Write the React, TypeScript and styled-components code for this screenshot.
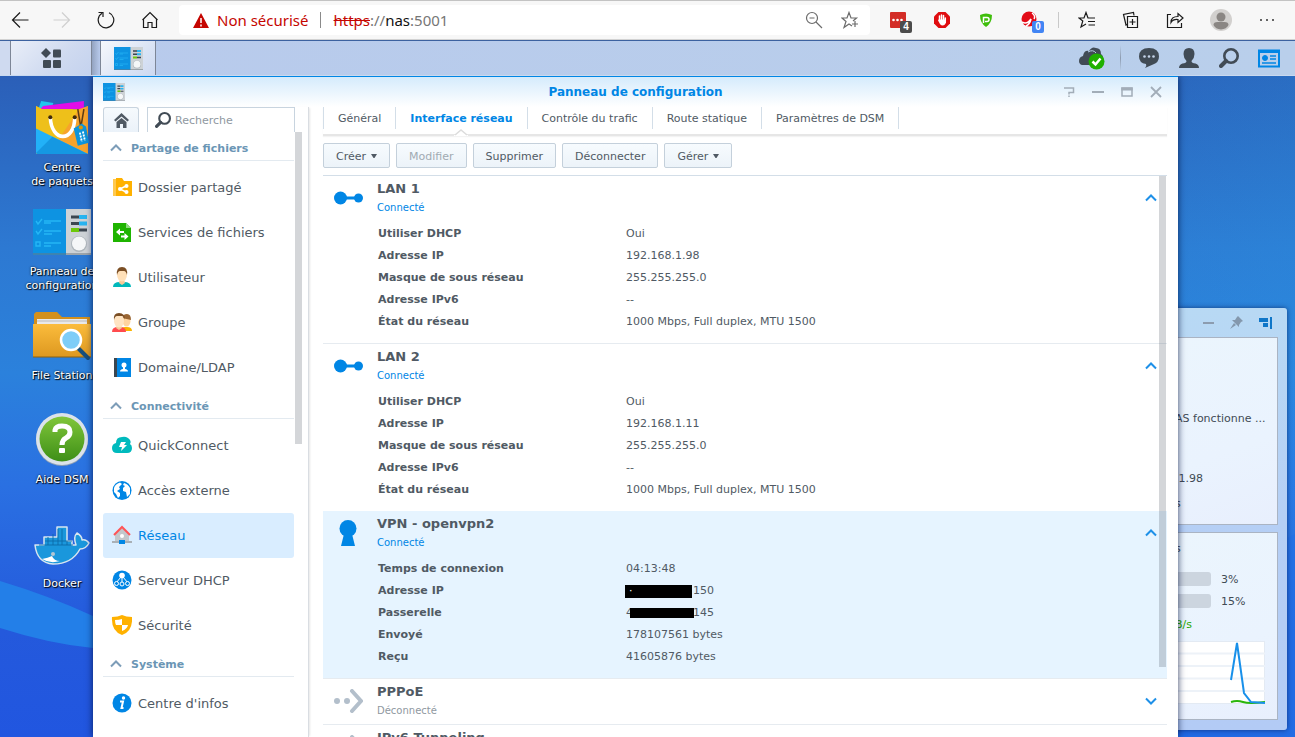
import React from 'react';
import styled, { createGlobalStyle, css } from 'styled-components';

const Global = createGlobalStyle`
  * { box-sizing: border-box; }
  html, body, #root { height: 100%; }
  body {
    margin: 0;
    overflow: hidden;
    font-family: Verdana, "DejaVu Sans", sans-serif;
    font-size: 11px;
    color: #505a64;
  }
  button, input { font-family: inherit; font-size: inherit; color: inherit; }
  button { border: 0; padding: 0; background: none; }
  h1, h2, h3, ul, dl, dd, dt, p { margin: 0; padding: 0; font-size: inherit; font-weight: inherit; }
  ul { list-style: none; }
  a { color: inherit; text-decoration: none; }
  svg { display: block; flex: none; }
`;

const Screen = styled.div`
  display: flex;
  flex-direction: column;
  height: 100vh;
  overflow: hidden;
`;

/* ---------- browser ---------- */

const BrowserBar = styled.header`
  display: flex;
  align-items: center;
  flex: none;
  height: 40px;
  padding-right: 6px;
  background: #f7f7f7;
  border-top: 1px solid #c3c3c3;
  border-bottom: 1px solid #d2d2d2;
  font-family: "Segoe UI", "Noto Sans", sans-serif;
  font-size: 15px;
`;

const BarButton = styled.button<{ $w?: number }>`
  display: flex;
  align-items: center;
  justify-content: center;
  position: relative;
  flex: none;
  width: ${p => p.$w ?? 44}px;
  height: 32px;
  color: #1b1b1b;
`;

const AddressBar = styled.div`
  display: flex;
  align-items: center;
  flex: 1;
  min-width: 0;
  height: 30px;
  margin: 0 6px 0 7px;
  padding: 0 2px 0 14px;
  background: #fff;
  border-radius: 4px;
  white-space: nowrap;
`;

const Warning = styled.span`
  margin-left: 8px;
  color: #c50500;
`;

const Bar = styled.span<{ $m: number; $c: string }>`
  flex: none;
  width: 1px;
  height: 16px;
  margin: 0 ${p => p.$m}px;
  background: ${p => p.$c};
`;

const Url = styled.span`
  flex: 1;
  color: #767676;
  s { color: #c50500; }
  b { color: #111; font-weight: 400; }
`;

const Badge = styled.span<{ $c: string }>`
  position: absolute;
  left: 24px;
  top: 17px;
  width: 12px;
  height: 12px;
  border-radius: 2px;
  background: ${p => p.$c};
  color: #fff;
  font: bold 10px/12px "Liberation Sans", sans-serif;
  text-align: center;
`;

/* ---------- taskbar ---------- */

const Taskbar = styled.nav`
  display: flex;
  align-items: stretch;
  flex: none;
  height: 36px;
  border-top: 1px solid #3c62a0;
  border-bottom: 1px solid #c9d9ef;
  padding-right: 6px;
  background: linear-gradient(90deg, #b8caec, #b9cfeb);
`;

const TaskEdge = styled.span`
  width: 10px;
  background: #cfdaf0;
`;

const MenuButton = styled.button`
  display: flex;
  align-items: center;
  justify-content: center;
  width: 82px;
  border: 1px solid #7d8697;
  border-width: 0 1px;
  background: linear-gradient(135deg, #e9eef8, #cfdaf0 60%, #c4d2ee);
`;

const TaskGap = styled.span`
  width: 8px;
  background: linear-gradient(90deg, #93a3c0, #b8caec);
`;

const TaskTab = styled.button`
  display: flex;
  align-items: center;
  justify-content: center;
  width: 56px;
  border: 1px solid #7d8697;
  border-width: 0 1px;
  background: linear-gradient(135deg, #f6f8fc, #dbe4f5 60%, #cdd9f1);
`;

const Spacer = styled.span`
  flex: 1;
`;

const TrayButton = styled.button`
  display: flex;
  align-items: center;
  justify-content: center;
  width: 40px;
  color: #414b55;
`;

const TrayRule = styled.span`
  width: 1px;
  margin: 4px 8px;
  background: linear-gradient(#b9cfeb, #8d9bb0, #b9cfeb);
`;

/* ---------- desktop ---------- */

const Desktop = styled.main`
  position: relative;
  flex: 1;
  min-height: 0;
  overflow: hidden;
  background:
    linear-gradient(90deg, transparent 75%, rgba(40, 165, 235, .2)),
    linear-gradient(#2b5fb8 0, #2d79d2 26%, #2b81dc 45%, #2a70e2 62%, #2459dc 84%, #2156e0);
`;

const Wallpaper = styled.svg`
  position: absolute;
  inset: 0;
  width: 100%;
  height: 100%;
`;

const Shortcuts = styled.ul`
  position: relative;
  width: 124px;
  padding-top: 24px;
`;

const Shortcut = styled.li`
  height: 104px;
  a {
    display: flex;
    flex-direction: column;
    align-items: center;
    gap: 5px;
    color: #fff;
    line-height: 14px;
    text-align: center;
    text-shadow: 1px 1px 1px #000, 0 0 2px rgba(0, 0, 0, .8);
    white-space: pre-line;
  }
`;

const IconBox = styled.span`
  display: flex;
  align-items: center;
  justify-content: center;
  height: 56px;
`;

/* ---------- widget panel ---------- */

const Widgets = styled.aside`
  position: absolute;
  top: 232px;
  right: 8px;
  width: 121px;
  padding: 0 9px 10px 0;
  border-radius: 3px;
  background: linear-gradient(#b8d9f4, #b5cff5 50%, #b3cbf5);
  box-shadow: 0 0 5px rgba(10, 30, 90, .7);
`;

const WidgetHead = styled.div`
  display: flex;
  align-items: center;
  justify-content: flex-end;
  gap: 16px;
  height: 29px;
  padding-right: 6px;
`;

const Card = styled.section<{ $gap?: boolean }>`
  display: flex;
  flex-direction: column;
  height: 188px;
  margin-top: ${p => (p.$gap ? 7 : 0)}px;
  padding: 0 11px 13px 8px;
  border: 1px solid #aab4c3;
  background: linear-gradient(160deg, #ebf5fd, #eaf3fe 60%, #e8effd);
  color: #414b55;
  white-space: nowrap;
`;

const CardLine = styled.p<{ $top: number; $green?: boolean }>`
  margin-top: ${p => p.$top}px;
  line-height: 16px;
  color: ${p => (p.$green ? '#1fa800' : 'inherit')};
`;

const Meters = styled.div`
  margin-top: 11px;
`;

const Meter = styled.div`
  display: flex;
  align-items: center;
  gap: 10px;
  height: 22px;
  &::before {
    content: "";
    width: 36px;
    height: 14px;
    border-radius: 0 3px 3px 0;
    background: #ccd5df;
  }
`;

const Chart = styled.svg`
  margin-top: 8px;
`;

/* ---------- control panel window ---------- */

const Window = styled.section`
  display: flex;
  flex-direction: column;
  position: absolute;
  top: 0;
  bottom: 0;
  left: 93px;
  right: 117px;
  padding: 0 11px 0 10px;
  border-top: 1px solid #0086e5;
  background: linear-gradient(#d5ebfc, #fff 30px);
  box-shadow: 0 -1px 0 #0086e5, 0 0 7px rgba(0, 15, 60, .8);
`;

const TitleBar = styled.header`
  display: flex;
  align-items: center;
  flex: none;
  height: 30px;
`;

const Title = styled.h1`
  flex: 1;
  padding-left: 84px;
  color: #0086e5;
  font-size: 12px;
  font-weight: 700;
  text-align: center;
`;

const WinButtons = styled.div`
  display: flex;
  gap: 15px;
  padding-right: 4px;
  button { width: 14px; height: 14px; color: #a2adb8; }
`;

const Columns = styled.div`
  display: flex;
  flex: 1;
  min-height: 0;
`;

const Sidebar = styled.aside`
  display: flex;
  flex-direction: column;
  position: relative;
  flex: none;
  width: 206px;
  padding-right: 14px;
  border-right: 1px solid #d9dde2;
  box-shadow: 2px 0 2px -1px rgba(0, 0, 0, .1);
`;

const SearchRow = styled.div`
  display: flex;
  flex: none;
  gap: 8px;
  height: 25px;
`;

const HomeButton = styled.button`
  display: flex;
  align-items: center;
  justify-content: center;
  width: 36px;
  border: 1px solid #c8d4df;
  border-bottom: 0;
  border-radius: 3px 3px 0 0;
  background: linear-gradient(#f6fafd, #ebf2f9);
`;

const SearchField = styled.label`
  display: flex;
  align-items: center;
  flex: 1;
  min-width: 0;
  gap: 4px;
  margin-right: -1px;
  padding-left: 7px;
  border: 1px solid #c8d4df;
  border-bottom: 0;
  input {
    flex: 1;
    min-width: 0;
    padding: 0;
    border: 0;
    outline: 0;
    background: none;
  }
  input::placeholder { color: #8f989f; opacity: 1; }
`;

const Group = styled.h2`
  display: flex;
  align-items: center;
  gap: 9px;
  height: 29px;
  margin-bottom: 4px;
  padding: 4px 0 0 7px;
  border-bottom: 1px solid #e3eaf0;
  color: #6b96b5;
  font-size: 11px;
  font-weight: 700;
`;

const NavItem = styled.a<{ $on?: boolean }>`
  display: flex;
  align-items: center;
  gap: 6px;
  height: 45px;
  padding-left: 8px;
  border-radius: 3px;
  font-size: 13px;
  ${p => p.$on && css`background: #d9edff; color: #0086e5;`}
`;

const ScrollThumb = styled.span<{ $right: number; $top: number; $h: string }>`
  position: absolute;
  top: ${p => p.$top}px;
  right: ${p => p.$right}px;
  width: 7px;
  height: ${p => p.$h};
  background: rgba(60, 70, 80, .22);
`;

const Content = styled.div`
  display: flex;
  flex-direction: column;
  flex: 1;
  min-width: 0;
  padding-left: 14px;
`;

const Tabs = styled.div`
  display: flex;
  flex: none;
  height: 29px;
  border-bottom: 2px solid #e6e6e6;
  box-shadow: 0 1px 1px #f3f3f3;
`;

const Tab = styled.button<{ $on?: boolean }>`
  position: relative;
  height: 22px;
  padding: 0 14px;
  border-right: 1px solid #d3dee8;
  white-space: nowrap;
  &:first-child { border-left: 1px solid #d3dee8; }
  ${p => p.$on && css`
    color: #0086e5;
    font-weight: 700;
    svg { position: absolute; left: calc(50% - 7px); top: 22px; }
  `}
`;

const Toolbar = styled.div`
  display: flex;
  flex: none;
  gap: 6px;
  padding: 7px 0;
`;

const ToolButton = styled.button`
  display: flex;
  align-items: center;
  gap: 5px;
  height: 25px;
  padding: 1px 12px 0;
  border: 1px solid #c4d0db;
  border-radius: 2px;
  background: linear-gradient(#f7fbfe, #ecf3f9);
  white-space: nowrap;
  &:disabled { color: #a1aab2; }
`;

const List = styled.div`
  position: relative;
  flex: 1;
  min-height: 0;
  overflow: hidden;
  border-top: 1px solid #d3dee8;
`;

const Interface = styled.article<{ $on?: boolean }>`
  border-bottom: 1px solid #e6ebf0;
  ${p => p.$on && css`margin-top: -1px; background: #e6f4ff;`}
`;

const IfaceHead = styled.header`
  display: flex;
  align-items: center;
  height: 45px;
  padding: 0 10px 1px 0;
`;

const IfaceIcon = styled.span`
  display: flex;
  justify-content: center;
  width: 50px;
  margin-right: 4px;
`;

const IfaceName = styled.div<{ $off?: boolean }>`
  flex: 1;
  h3 { font-size: 13px; font-weight: 700; line-height: 20px; }
  p { font-size: 10px; line-height: 18px; color: ${p => (p.$off ? '#8f989f' : '#0086e5')}; }
`;

const Details = styled.dl`
  display: grid;
  grid-template-columns: 248px 1fr;
  padding: 2px 0 10px 55px;
  line-height: 22px;
  dt { font-weight: 700; }
`;

const Redacted = styled.dd<{ $cut?: boolean }>`
  display: flex;
  align-items: center;
  i {
    width: ${p => (p.$cut ? 64 : 67)}px;
    height: ${p => (p.$cut ? 10 : 13)}px;
    margin-left: ${p => (p.$cut ? -3 : -1)}px;
    margin-right: ${p => (p.$cut ? -1 : 1)}px;
    padding-left: 4px;
    background: #000;
    color: #fff;
    font-style: normal;
    line-height: 11px;
    z-index: 1;
  }
`;

/* ---------- drawings ---------- */

const PanelIcon = ({ w, h }: { w: number; h: number }) => (
  <svg width={w} height={h} viewBox="0 0 58 46" preserveAspectRatio="none">
    <rect width="58" height="46" fill="#cdd2d6" />
    <rect width="33" height="46" fill="#0d93e2" />
    <path d="M0 45h58" stroke="#6d7780" strokeWidth="2" opacity=".5" />
    <g stroke="#25b6f5" strokeWidth="1.400" fill="none">
      <path d="M3 12l2 3 4-5M11 12h17M11 14h7M3 22l2 3 4-5M11 22h17M11 25h8M3 33h4v4H3zM11 34h17M11 37h7" />
    </g>
    <path d="M38 8h8M38 14.500h8M46 21h8" stroke="#3c4650" strokeWidth="3" />
    <path d="M46 8h8M46 14.500h8" stroke="#28b4f0" strokeWidth="4" />
    <path d="M38 21h8" stroke="#6cc80a" strokeWidth="4" />
    <circle cx="46" cy="35" r="8" fill="#aeb6bc" />
    <circle cx="46" cy="34.500" r="7" fill="#f5f7f8" />
  </svg>
);

const BagIcon = () => (
  <svg width="54" height="54" viewBox="0 0 53 53">
    <path d="M6 0l12 2-2 7H3z" fill="#22c5ee" /><path d="M8 5l40-5v8H5z" fill="#e20de8" />
    <path d="M1 5l6 3h39l6-3v46a1 1 0 0 1-1 1H2a1 1 0 0 1-1-1z" fill="#f5c417" />
    <path d="M1 5l6 3h30L29 52H2L1 51z" fill="#eec01a" />
    <path d="M43 8l9-3v47H36l-13-14z" fill="#f7a32c" />
    <path d="M1 27l51 25H2L1 51z" fill="#22b1f8" /><path d="M1 51l16-16 35 17H2z" fill="#1598e2" />
    <path d="M15 16C16 41 39 41 39 16" fill="none" stroke="#fff" strokeWidth="3.500" />
    <circle cx="15" cy="16" r="2" fill="#412a0a" /><circle cx="39" cy="16" r="2" fill="#412a0a" />
    <path d="M42 8l3 18M48 8l-3 18" stroke="#5d3d16" strokeWidth="1.500" fill="none" />
    <path d="M38 27l8-5 4 3 3 16-11 3z" fill="#0d94db" /><circle cx="45" cy="26" r="2" fill="#d9980a" />
    <path d="M44 31l2 9M47 30l2 9" stroke="#fff" strokeWidth="1.800" strokeDasharray="2 1" />
  </svg>
);

const FolderIcon = () => (
  <svg width="58" height="50" viewBox="0 0 58 50">
    <defs><linearGradient id="fold" x2="0" y2="1"><stop stopColor="#fbbc3c" /><stop offset="1" stopColor="#dd9820" /></linearGradient></defs>
    <path d="M1 3l2-2h21l5 5h28v10H1z" fill="#d3901c" /><path d="M4 8h50v7H4z" fill="#e9e9e9" /><path d="M4 10h50" stroke="#bbb" />
    <path d="M0 13h58v33H0z" fill="url(#fold)" /><path d="M0 46h58" stroke="#8d610f" />
    <path d="M46 38l9 9" stroke="#174f7c" strokeWidth="4" strokeLinecap="round" />
    <circle cx="38" cy="29" r="10" fill="#7ecdf8" stroke="#fff" strokeWidth="2.500" />
  </svg>
);

const HelpIcon = () => (
  <svg width="54" height="56" viewBox="0 0 54 56">
    <defs><linearGradient id="help" x2="0" y2="1"><stop stopColor="#80c63a" /><stop offset="1" stopColor="#3e8f17" /></linearGradient></defs>
    <circle cx="27" cy="28" r="26" fill="#8f9fb4" /><circle cx="27" cy="27" r="26" fill="#dbe2ea" />
    <circle cx="27" cy="27" r="22.500" fill="url(#help)" />
    <path d="M20 20v-2q1-4 7-4 8 0 8 6 0 4-4 6-4 2-4 7" fill="none" stroke="#fff" strokeWidth="5" />
    <rect x="24" y="36" width="6" height="5" rx="1" fill="#fff" />
  </svg>
);

const DockerIcon = () => (
  <svg width="56" height="48" viewBox="0 -6 56 48">
    <path d="M1 19h9v-8h13V1h10v14h5v4h4q-3-8 1-12 5 3 5 7 4-1 7 3-3 6-9 6-8 15-27 15Q3 37 1 19z" fill="#1a97dc" stroke="#d7e5ef" strokeWidth="1.500" strokeLinejoin="round" />
    <path d="M5 19h34M11 15h27M14 11v8M19 8v11M24 3v16M28 3v16M33 15v4" stroke="#0b6ca8" strokeWidth=".9" />
    <circle cx="19" cy="28" r="2" fill="#b3c6d2" /><path d="M8 33q6-1 10-3 2 5 8 5-10 3-18-2z" fill="#fff" />
  </svg>
);

const navIcons: Record<string, React.ReactNode> = {
  share: <><path d="M1 2h7l2 2v15H1z" fill="#ffc94f" /><path d="M4 1h6l2 3h8v15H4z" fill="#ffb100" /><path d="M8 12l6-3M8 12l6 3" stroke="#fff" strokeWidth="1.500" /><g fill="#fff"><circle cx="8" cy="12" r="2" /><circle cx="14.500" cy="9" r="2" /><circle cx="14.500" cy="15" r="2" /></g></>,
  files: <><path d="M1 1h13l5 5v14H1z" fill="#1fb400" /><path d="M14 1l5 5h-5z" fill="#8edb7e" /><path d="M6 10h6M9 14.500h6" stroke="#fff" strokeWidth="2" /><path d="M8 6.500v7L4 10zM12.500 11v7l4-3.500z" fill="#fff" /></>,
  user: <><path d="M1 20q0-5 7-5h4q7 0 7 5z" fill="#00b8bb" /><path d="M8 12h4l1 4-3 2-3-2z" fill="#f6c997" /><ellipse cx="10" cy="8" rx="5" ry="6.500" fill="#ffe0b8" /><path d="M5 8Q4 0 10 0t5 8q-1-4-3-4H8Q6 4 5 8z" fill="#7b4e24" /></>,
  group: <><path d="M9 19q0-4 4-4h2q5 0 5 4z" fill="#fbb400" /><ellipse cx="14.500" cy="9" rx="4" ry="5.500" fill="#ffd49f" /><path d="M10 6q1-4 5-4t4 6z" fill="#9a6633" /><path d="M0 20q0-5 6-5h2q6 0 6 5z" fill="#ff4b4e" /><path d="M5 13h4l1 3-3 2-3-2z" fill="#f6c997" /><ellipse cx="7" cy="9" rx="5" ry="6.500" fill="#ffe4c2" /><path d="M2 8Q1 1 7 1t6 7q-1-4-3-4H5Q3 4 2 8z" fill="#7b4e24" /></>,
  book: <><rect x="2" y="1" width="3" height="19" fill="#3a4650" /><rect x="5" y="1" width="14" height="19" fill="#0086e5" /><circle cx="12" cy="8" r="2.500" fill="#fff" /><path d="M8 14.500q0-2 3-2.500v-2h2v2q3 .5 3 2.500z" fill="#fff" /></>,
  quick: <><path d="M5 18q-5 0-5-5 0-4 4-5 0-6 6-6 3-1 6 1 4 3 2 6 2 1 2 4 0 5-5 5z" fill="#00babd" /><path d="M9 7h5l-2 3h3l-6 6 1-4H7z" fill="#fff" /></>,
  globe: <><circle cx="10" cy="10.500" r="9.500" fill="#0086e5" /><path d="M2 8q1-4 6-5.500l2 1.500-3 3 1 2-3 2 3 2v3l-2 2-2-4-2-2zM12 3q4 1 6 5v6l-3 3-1-5-3-1v-3l2-2-2-1z" fill="#fff" /></>,
  network: <><path d="M0 17h20" stroke="#a9b0b6" strokeWidth="2" /><path d="M3 9l7-6 7 6v7H3z" fill="#c3c7cb" /><path d="M2 10l8-8 8 8" fill="none" stroke="#ff5457" strokeWidth="2" /><circle cx="10" cy="11" r="2" fill="#fff" /><rect x="7" y="15" width="6" height="4" fill="#0086e5" /></>,
  dhcp: <><circle cx="10" cy="10" r="9.500" fill="#0086e5" /><circle cx="10" cy="5.500" r="2.800" fill="#fff" /><path d="M10 7v6M9 7l-5 6M11 7l5 6" stroke="#fff" /><g fill="#0086e5" stroke="#fff"><circle cx="4.500" cy="13.500" r="2" /><circle cx="10" cy="14" r="2" /><circle cx="15.500" cy="13.500" r="2" /></g></>,
  shield: <><path d="M0 2q6 0 10-2 4 2 10 2 1 14-10 18Q-1 16 0 2z" fill="#ffb100" /><path d="M10 4v6H4q-1-2-1-5 4 0 7-1zM10 10h6q-1 4-6 6z" fill="#fff" /></>,
  info: <><circle cx="10" cy="10" r="9.500" fill="#0086e5" /><circle cx="11.500" cy="5" r="1.700" fill="#fff" /><path d="M8 8.500h3l-1.500 6.500h2" fill="none" stroke="#fff" strokeWidth="2" /></>,
};

const NavIcon = ({ name }: { name: string }) => <svg width="21" height="21" viewBox="-1 0 21 21">{navIcons[name]}</svg>;

const Chevron = ({ c, down }: { c: string; down?: boolean }) => (
  <svg width="12" height="8" viewBox="0 0 12 8"><path d={down ? 'M1 1.500l5 5 5-5' : 'M1 6.500l5-5 5 5'} fill="none" stroke={c} strokeWidth="2" /></svg>
);

const ifaceIcons = {
  lan: <svg width="30" height="14" viewBox="-1 0 30 14"><path d="M6 7h18" stroke="#0086e5" strokeWidth="3" /><circle cx="6.500" cy="7" r="6.500" fill="#0086e5" /><circle cx="24.500" cy="7" r="4.500" fill="#0086e5" /></svg>,
  vpn: <svg width="18" height="26" viewBox="0 0 18 26"><circle cx="9" cy="8.500" r="8.500" fill="#0086e5" /><path d="M5 14h8l3 12H2z" fill="#0086e5" /></svg>,
  off: <svg width="30" height="24" viewBox="-1 0 30 24"><circle cx="3" cy="12" r="3" fill="#b3bfcb" /><circle cx="13" cy="12" r="3" fill="#b3bfcb" /><path d="M18 2l9 10-9 10" fill="none" stroke="#b3bfcb" strokeWidth="4" strokeLinecap="round" /></svg>,
};

const Magnifier = ({ size }: { size: number }) => (
  <svg width={size} height={size} viewBox="0 0 20 20" fill="none" stroke="#414b55"><circle cx="12" cy="8" r="6.700" strokeWidth="2.600" /><path d="M7 13l-5 5" strokeWidth="4" strokeLinecap="round" /></svg>
);

const Line = ({ children, size = 18, color = '#1b1b1b' }: { children: React.ReactNode; size?: number; color?: string }) => (
  <svg width={size} height={size} viewBox="0 0 18 18" fill="none" stroke={color} strokeWidth="1.200">{children}</svg>
);

/* ---------- data ---------- */

const shortcuts = [
  { label: 'Centre\nde paquets', icon: <BagIcon /> },
  { label: 'Panneau de\nconfiguration', icon: <PanelIcon w={58} h={46} /> },
  { label: 'File Station', icon: <FolderIcon /> },
  { label: 'Aide DSM', icon: <HelpIcon /> },
  { label: 'Docker', icon: <DockerIcon /> },
];

const groups = [
  { name: 'Partage de fichiers', items: [['share', 'Dossier partagé'], ['files', 'Services de fichiers'], ['user', 'Utilisateur'], ['group', 'Groupe'], ['book', 'Domaine/LDAP']] },
  { name: 'Connectivité', items: [['quick', 'QuickConnect'], ['globe', 'Accès externe'], ['network', 'Réseau'], ['dhcp', 'Serveur DHCP'], ['shield', 'Sécurité']] },
  { name: 'Système', items: [['info', "Centre d'infos"]] },
];

const tabs = ['Général', 'Interface réseau', 'Contrôle du trafic', 'Route statique', 'Paramètres de DSM'];

const lanRows = (ip: string): [string, string][] => [
  ['Utiliser DHCP', 'Oui'],
  ['Adresse IP', ip],
  ['Masque de sous réseau', '255.255.255.0'],
  ['Adresse IPv6', '--'],
  ['État du réseau', '1000 Mbps, Full duplex, MTU 1500'],
];

interface IfaceProps {
  name: string;
  status?: string;
  icon: keyof typeof ifaceIcons;
  on?: boolean;
  off?: boolean;
  children?: React.ReactNode;
}

const Iface = ({ name, status, icon, on, off, children }: IfaceProps) => (
  <Interface $on={on}>
    <IfaceHead>
      <IfaceIcon>{ifaceIcons[icon]}</IfaceIcon>
      <IfaceName $off={off}><h3>{name}</h3><p>{status}</p></IfaceName>
      <button aria-label={off ? 'Développer' : 'Réduire'}><Chevron c="#1e90e8" down={off} /></button>
    </IfaceHead>
    {children && <Details>{children}</Details>}
  </Interface>
);

const Rows = ({ rows }: { rows: [string, string][] }) => (
  <>{rows.map(([k, v]) => <React.Fragment key={k}><dt>{k}</dt><dd>{v}</dd></React.Fragment>)}</>
);

const Caret = () => <svg width="6" height="4" viewBox="0 0 6 4"><path d="M0 0h6L3.500 4h-1z" fill="#505a64" /></svg>;

export default function App() {
  return (
    <Screen>
      <Global />
      <BrowserBar>
        <BarButton $w={40} aria-label="Précédent"><Line><path d="M17.500 9H1.500M9 1.500L1.500 9 9 16.500" /></Line></BarButton>
        <BarButton aria-label="Suivant"><Line color="#cfcfcf"><path d="M.5 9h16M9 1.500L16.500 9 9 16.500" /></Line></BarButton>
        <BarButton aria-label="Actualiser"><Line><path d="M12 1.800A7.800 7.800 0 1 1 5 2.300M1.500 1.500h4.500V6" /></Line></BarButton>
        <BarButton aria-label="Accueil"><Line><path d="M2.500 8v8.500H7v-5h4v5h4.500V8M1.500 9L9 1.500 16.500 9" /></Line></BarButton>
        <AddressBar>
          <svg width="16" height="15" viewBox="0 0 16 15"><path d="M8 0l8 15H0z" fill="#c50500" /><path d="M8 5v5M8 11.500v2" stroke="#fff" strokeWidth="1.500" /></svg>
          <Warning>Non sécurisé</Warning>
          <Bar $m={12} $c="#8a8a8a" />
          <Url><s>https</s>://<b>nas</b>:5001</Url>
          <BarButton $w={36} aria-label="Zoom"><Line color="#6b6b6b"><circle cx="7" cy="7" r="5.500" /><path d="M11 11l6 6M4.500 7h5" /></Line></BarButton>
          <BarButton $w={36} aria-label="Ajouter aux favoris"><Line color="#6b6b6b"><path d="M11 15l-3-2-5 3.500 2-6L1 7h5l2-5.500L10 7h5.500L12 10M14 10v6M11 13h6" /></Line></BarButton>
        </AddressBar>
        <BarButton aria-label="Mots de passe">
          <svg width="18" height="18" viewBox="0 0 18 18"><rect x="1" y="1" width="16" height="16" rx="1" fill="#d32d27" /><g fill="#fff"><circle cx="4.500" cy="9" r="1.300" /><circle cx="8.500" cy="9" r="1.300" /><circle cx="12.500" cy="9" r="1.300" /></g></svg>
          <Badge $c="#4c4c4c">4</Badge>
        </BarButton>
        <BarButton aria-label="Bloqueur de publicités">
          <svg width="18" height="18" viewBox="0 0 18 18"><path d="M5.500 1h7L17 5.500v7L12.500 17h-7L1 12.500v-7z" fill="#e00d10" /><path d="M6.500 5v5M8.500 4v6M10.500 4.500V10M12.300 7v4" stroke="#fff" strokeWidth="1.500" strokeLinecap="round" /><path d="M5.800 8.500h7.200v3q-1 3-3.500 3T5 9z" fill="#fff" /></svg>
        </BarButton>
        <BarButton aria-label="Protection">
          <svg width="16" height="16" viewBox="0 0 16 16"><path d="M2 3q6-3 12 0 0 8-6 12Q2 11 2 3z" fill="#3fbe0b" /><path d="M5.500 11V5.500H9q2 0 2 2t-2 2H7" fill="none" stroke="#fff" strokeWidth="1.500" /></svg>
        </BarButton>
        <BarButton aria-label="Sécurité web">
          <svg width="18" height="18" viewBox="0 0 18 18"><circle cx="8" cy="8" r="7.500" fill="#e20b17" /><path d="M1 11q5 3 9-3-1 5-5 7M11 2q4 3 2 6" fill="none" stroke="#fff" strokeWidth="1.500" /></svg>
          <Badge $c="#4285f4">0</Badge>
        </BarButton>
        <Bar $m={6} $c="#c9c9c9" />
        <BarButton aria-label="Favoris"><Line><path d="M8 13l-5 3 1.800-6L1 7h5l2-5.500L10 7M9.500 7H17M10 10.500h7M10.500 14H17" /></Line></BarButton>
        <BarButton aria-label="Collections"><Line><path d="M5 13.500l-1 .5L1.500 3.500l10-2 .5 3M5.500 5.500h10v11h-10zM10.500 8v6M7.500 11h6" /></Line></BarButton>
        <BarButton aria-label="Partager"><Line><path d="M5 3.500H1.500v13h14V12M5 11.500q0-6 7-6v-3L17 7l-5 4.500V8.500Q7 8 5 11.500z" /></Line></BarButton>
        <BarButton $w={48} aria-label="Profil">
          <svg width="22" height="22" viewBox="0 0 22 22"><circle cx="11" cy="11" r="11" fill="#d2d0ce" /><circle cx="11" cy="8" r="4.500" fill="#8a8683" /><path d="M3.500 16q0-3 4-3h7q4 0 4 3-2 4-7.500 4.500Q5.500 20 3.500 16z" fill="#8a8683" /></svg>
        </BarButton>
        <BarButton aria-label="Paramètres"><svg width="16" height="4" viewBox="0 0 16 4" fill="#333"><circle cx="2" cy="2" r="1" /><circle cx="8" cy="2" r="1" /><circle cx="14" cy="2" r="1" /></svg></BarButton>
      </BrowserBar>

      <Taskbar>
        <TaskEdge />
        <MenuButton aria-label="Menu principal">
          <svg width="20" height="20" viewBox="0 0 20 20" fill="#414b55"><path d="M5 0l5 5-5 5-5-5z" /><rect x="12" y="1.500" width="8" height="8" rx="1" /><rect x="2" y="12" width="8" height="8" rx="1" /><rect x="12" y="12" width="8" height="8" rx="1" /></svg>
        </MenuButton>
        <TaskGap />
        <TaskTab aria-label="Panneau de configuration"><PanelIcon w={29} h={23} /></TaskTab>
        <Spacer />
        <TrayButton aria-label="Synchronisation">
          <svg width="26" height="24" viewBox="0 0 26 24"><path d="M3 19q-3-1-3-4 0-4 4-5 1-6 6-5 3-5 7-3 5 0 5 6 3 2 2 7v4z" fill="#414b55" /><path d="M9 6q5-3 8 1" stroke="#b9cfeb" fill="none" /><circle cx="17.500" cy="15.500" r="8" fill="#1fb000" /><path d="M13.500 15.500l3 3 5-6" fill="none" stroke="#fff" strokeWidth="2.500" /></svg>
        </TrayButton>
        <TrayRule />
        <TrayButton aria-label="Notifications">
          <svg width="20" height="20" viewBox="0 0 20 20"><path d="M10 0q10 0 10 8.500 0 6-6 8-3 1-8 3.500 2-2 1-4Q0 15 0 8.500 0 0 10 0z" fill="#414b55" /><g fill="#c5d4ea"><circle cx="5.500" cy="8.500" r="1.300" /><circle cx="10" cy="8.500" r="1.300" /><circle cx="14.500" cy="8.500" r="1.300" /></g></svg>
        </TrayButton>
        <TrayButton aria-label="Options">
          <svg width="20" height="20" viewBox="0 0 20 20"><path d="M10 0q5.500 0 5.500 6 0 4-3 7 0 2 4 2.500 3.500 1 3.500 4.500H0q0-3.500 3.500-4.500 4-.5 4-2.500-3-3-3-7 0-6 5.500-6z" fill="#414b55" /></svg>
        </TrayButton>
        <TrayButton aria-label="Rechercher"><Magnifier size={20} /></TrayButton>
        <TrayButton aria-label="Widgets">
          <svg width="22" height="19" viewBox="0 0 22 19" fill="none" stroke="#0086e5"><rect x="1" y="1.500" width="20" height="16" strokeWidth="2" /><path d="M1 2.500h20" strokeWidth="3" /><path d="M12 7h6M12 10h6M4 14h14" strokeWidth="1.500" /><circle cx="7" cy="9" r="2.500" fill="#0086e5" /></svg>
        </TrayButton>
      </Taskbar>

      <Desktop>
        <Wallpaper viewBox="0 0 1295 661" preserveAspectRatio="none">
          <path d="M0 505Q50 520 93 540L400 600V661L93 572Q50 568 0 552z" fill="#237fe8" />
          <path d="M1100 560Q1220 500 1295 458V661H1100z" fill="#2270e6" opacity=".6" />
        </Wallpaper>
        <Shortcuts>
          {shortcuts.map(s => (
            <Shortcut key={s.label}><a href="#"><IconBox>{s.icon}</IconBox>{s.label}</a></Shortcut>
          ))}
        </Shortcuts>

        <Widgets>
          <WidgetHead>
            <svg width="11" height="12" viewBox="0 0 11 12"><path d="M0 6h11" stroke="#8c9caf" strokeWidth="2" /></svg>
            <svg width="13" height="13" viewBox="0 0 13 13" fill="#8498ad"><path d="M8 0l5 5-2 1-2 3v2L2 4h3l2-3zM4 7l2 2-6 4z" /></svg>
            <svg width="13" height="12" viewBox="0 0 13 12" fill="#0f76c8"><rect x="11" width="2" height="12" /><rect y="1" width="9" height="4" /><rect x="4" y="6" width="5" height="4" /></svg>
          </WidgetHead>
          <Card>
            <CardLine $top={73}>AS fonctionne ...</CardLine>
            <CardLine $top={44}>.1.98</CardLine>
            <CardLine $top={9}>s</CardLine>
          </Card>
          <Card $gap>
            <CardLine $top={8}>s</CardLine>
            <Meters>
              <Meter>3%</Meter>
              <Meter>15%</Meter>
            </Meters>
            <CardLine $top={5} $green>B/s</CardLine>
            <Chart width="90" height="63" viewBox="0 0 90 63" fill="none">
              <rect x=".5" y=".5" width="89" height="62" fill="#fff" stroke="#e3eaf3" />
              <path d="M0 12.500h90M0 25h90M0 37.500h90M0 50h90" stroke="#edf2f8" strokeWidth="2" />
              <path d="M56 61q6-2 12 0t22 0" stroke="#28b60b" strokeWidth="2" />
              <path d="M56 39L62 2l7 50 7 9 14 1" stroke="#1890ea" strokeWidth="2" />
            </Chart>
          </Card>
        </Widgets>

        <Window>
          <TitleBar>
            <PanelIcon w={22} h={18} />
            <Title>Panneau de configuration</Title>
            <WinButtons>
              <button aria-label="Aide"><svg width="14" height="14" viewBox="0 0 14 14" fill="none" stroke="currentColor" strokeWidth="1.500"><path d="M2 3h9.500v4.500H7v2M7 10.500V12" /></svg></button>
              <button aria-label="Réduire"><svg width="14" height="14" viewBox="0 0 14 14" stroke="currentColor" strokeWidth="2"><path d="M1 7h12" /></svg></button>
              <button aria-label="Agrandir"><svg width="14" height="14" viewBox="0 0 14 14" fill="none" stroke="currentColor"><rect x="2" y="3" width="10" height="8" strokeWidth="1.500" /><path d="M1.300 4h11.400" strokeWidth="3" /></svg></button>
              <button aria-label="Fermer"><svg width="14" height="14" viewBox="0 0 14 14" stroke="currentColor" strokeWidth="1.800"><path d="M2 2l10 10M12 2L2 12" /></svg></button>
            </WinButtons>
          </TitleBar>
          <Columns>
            <Sidebar>
              <SearchRow>
                <HomeButton aria-label="Accueil">
                  <svg width="15" height="15" viewBox="0 0 15 15" fill="#505a64"><path d="M7.500 0L15 7l-1.500 1.500-6-5-6 5L0 7z" /><path d="M2.500 9l5-4 5 4v6H9v-4H6v4H2.500z" /></svg>
                </HomeButton>
                <SearchField><Magnifier size={16} /><input placeholder="Recherche" aria-label="Recherche" /></SearchField>
              </SearchRow>
              {groups.map(g => (
                <nav key={g.name}>
                  <Group><Chevron c="#7d9db8" />{g.name}</Group>
                  {g.items.map(([icon, label]) => (
                    <NavItem key={label} href="#" $on={label === 'Réseau'}><NavIcon name={icon} />{label}</NavItem>
                  ))}
                </nav>
              ))}
              <ScrollThumb $right={6} $top={25} $h="312px" />
            </Sidebar>
            <Content>
              <Tabs role="tablist">
                {tabs.map(t => {
                  const on = t === 'Interface réseau';
                  return (
                    <Tab key={t} role="tab" aria-selected={on} $on={on}>
                      {t}
                      {on && <svg width="14" height="7" viewBox="0 0 14 7"><path d="M0 6h1.500L7 1l5.500 5H14v1H0z" fill="#fff" /><path d="M1 6l6-5 6 5" fill="none" stroke="#dcdcdc" strokeWidth="1.500" /></svg>}
                    </Tab>
                  );
                })}
              </Tabs>
              <Toolbar>
                <ToolButton>Créer <Caret /></ToolButton>
                <ToolButton disabled>Modifier</ToolButton>
                <ToolButton>Supprimer</ToolButton>
                <ToolButton>Déconnecter</ToolButton>
                <ToolButton>Gérer <Caret /></ToolButton>
              </Toolbar>
              <List>
                <Iface name="LAN 1" status="Connecté" icon="lan"><Rows rows={lanRows('192.168.1.98')} /></Iface>
                <Iface name="LAN 2" status="Connecté" icon="lan"><Rows rows={lanRows('192.168.1.11')} /></Iface>
                <Iface name="VPN - openvpn2" status="Connecté" icon="vpn" on>
                  <dt>Temps de connexion</dt><dd>04:13:48</dd>
                  <dt>Adresse IP</dt><Redacted><i>·</i>150</Redacted>
                  <dt>Passerelle</dt><Redacted $cut>4<i />145</Redacted>
                  <Rows rows={[['Envoyé', '178107561 bytes'], ['Reçu', '41605876 bytes']]} />
                </Iface>
                <Iface name="PPPoE" status="Déconnecté" icon="off" off />
                <Iface name="IPv6 Tunneling" status="Déconnecté" icon="off" off />
                <ScrollThumb $right={1} $top={0} $h="491px" />
              </List>
            </Content>
          </Columns>
        </Window>
      </Desktop>
    </Screen>
  );
}
